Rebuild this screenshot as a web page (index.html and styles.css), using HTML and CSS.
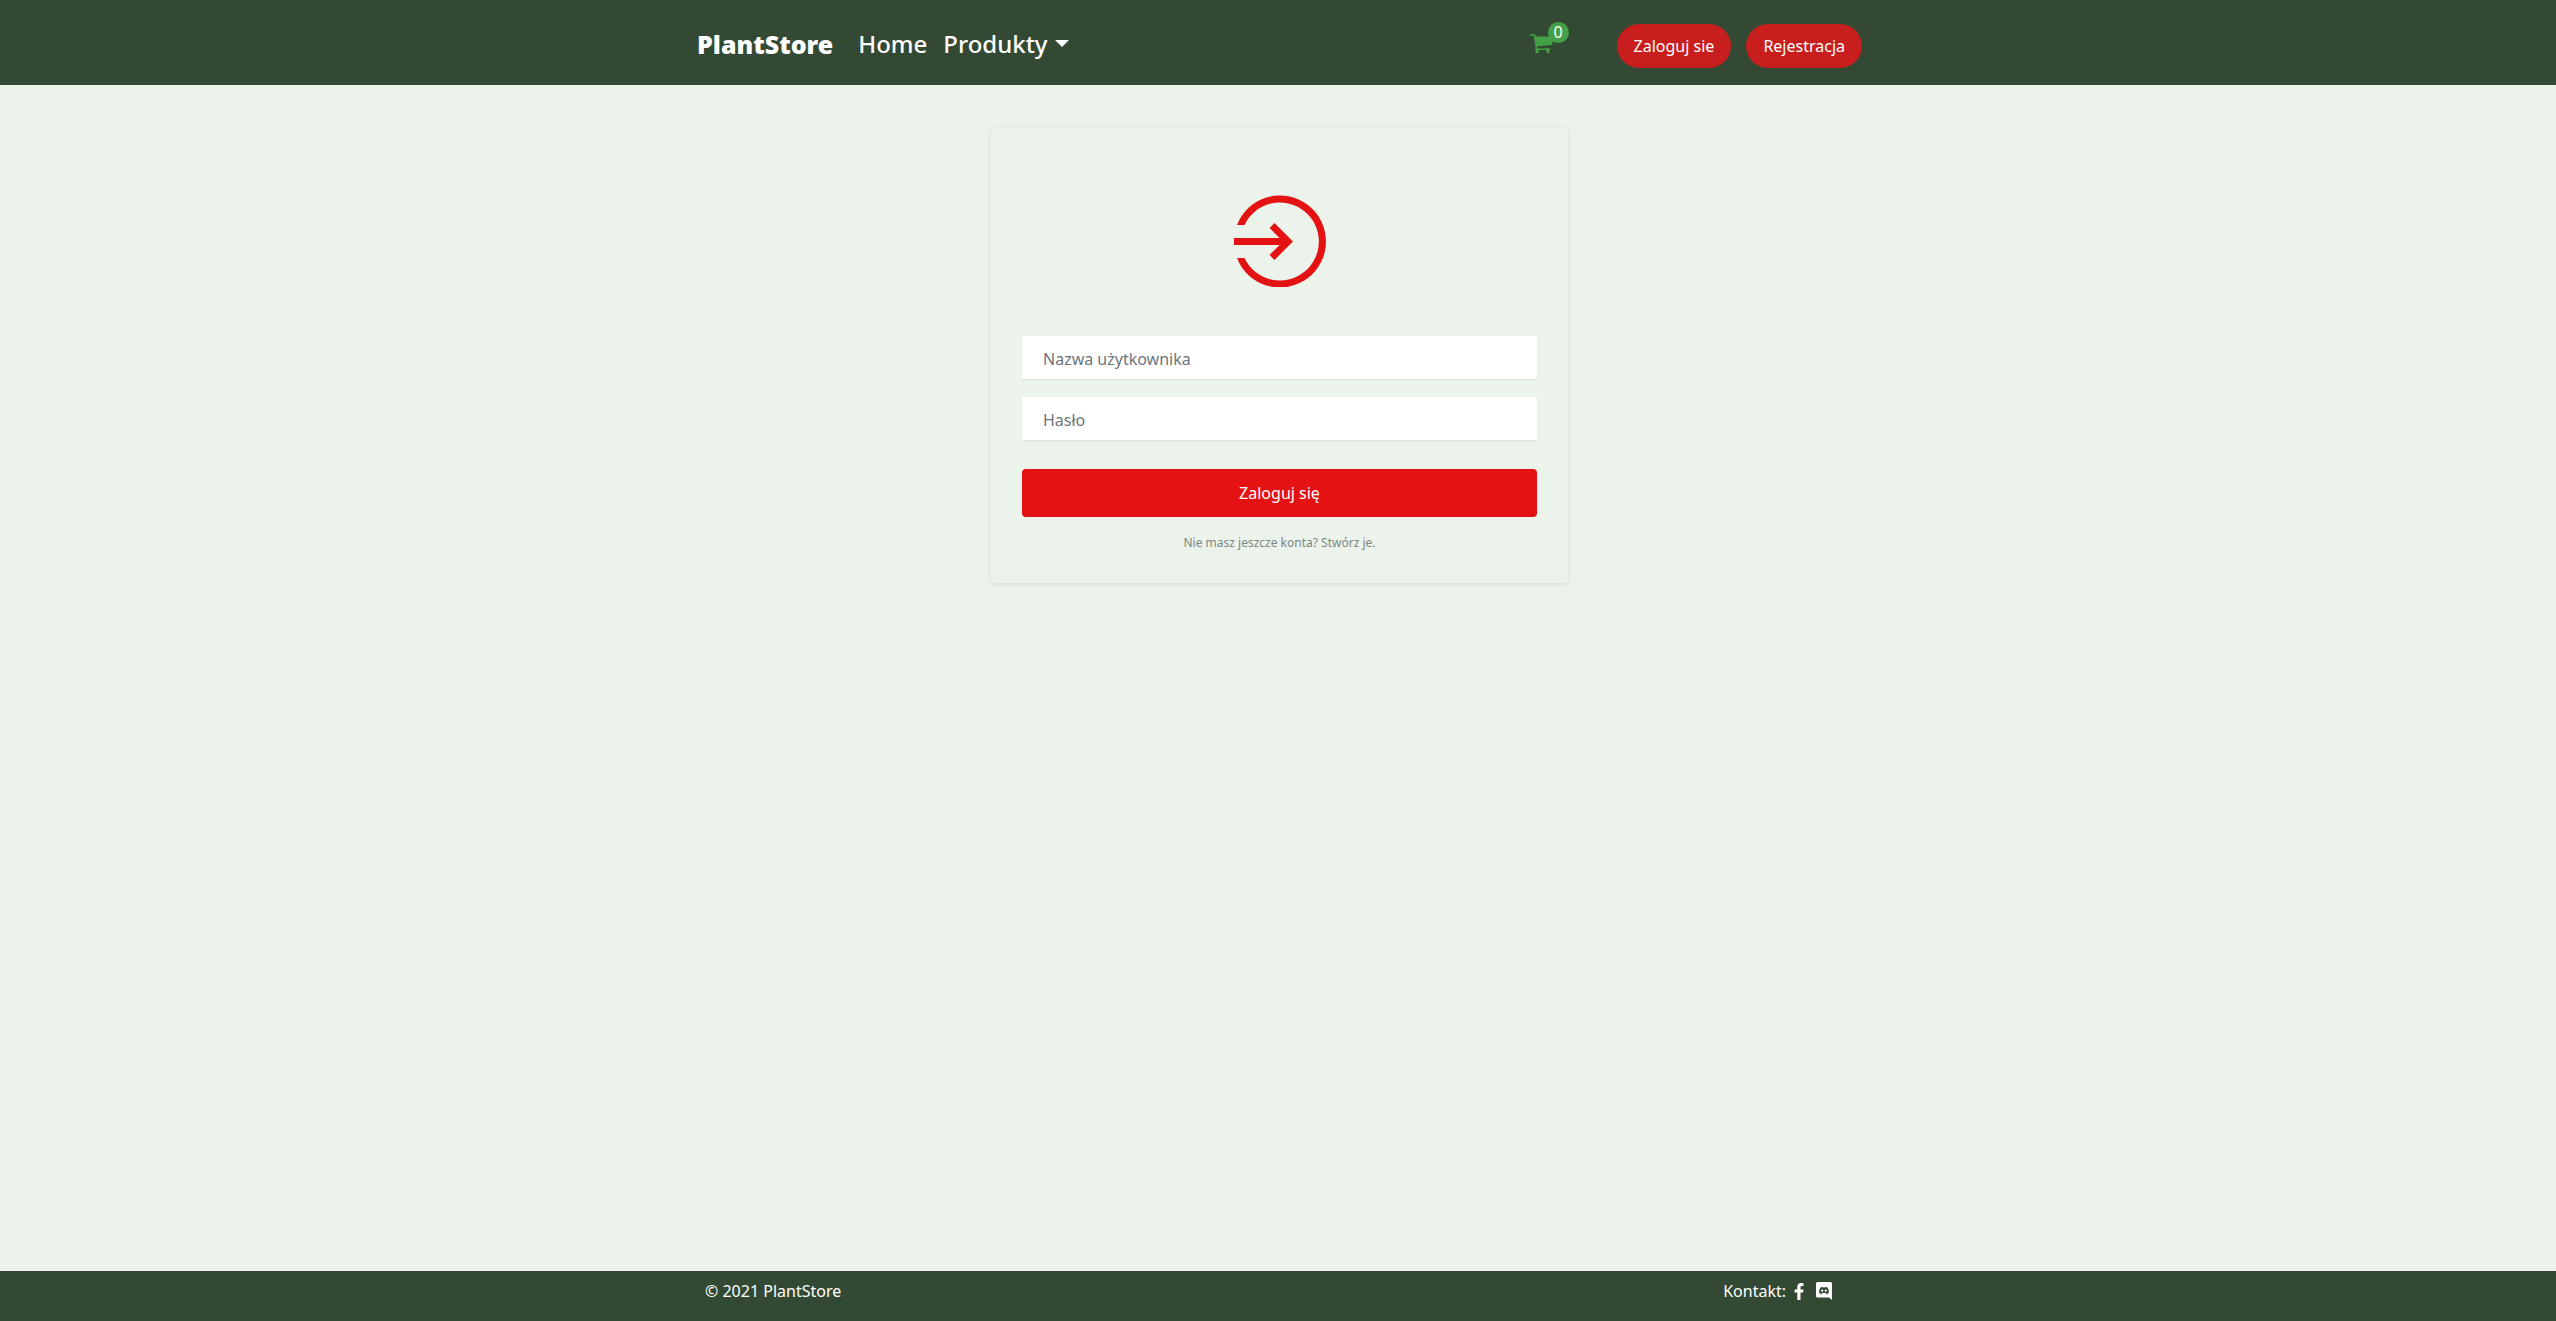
FILE: index.html
```html
<!DOCTYPE html>
<html lang="pl">
<head>
  <meta charset="utf-8">
  <meta name="viewport" content="width=device-width, initial-scale=1">
  <title>PlantStore</title>
  <link rel="stylesheet" href="styles.css">
</head>
<body>
  <header class="navbar">
    <div class="navbar-inner">
      <a class="brand" href="#">PlantStore</a>
      <nav class="nav-links">
        <a class="nav-link" href="#">Home</a>
        <a class="nav-link dropdown" href="#">Produkty</a>
      </nav>
      <a class="cart" href="#" aria-label="Koszyk">
        <svg class="cart-icon" viewBox="0 0 24 20" aria-hidden="true">
          <path d="M0 1h4.500l2 13" fill="none" stroke="currentColor" stroke-width="1.500"/>
          <path d="M4 2.500h20l-2 8.500L6 12.500z" fill="currentColor"/>
          <path d="M6.500 12v3.300H20" fill="none" stroke="currentColor" stroke-width="1.500"/>
          <path d="M5.500 14.600h3V19h-3zM16.500 14.600h3V19h-3z" fill="currentColor"/>
        </svg>
        <span class="cart-count">0</span>
      </a>
      <div class="account">
        <button class="pill" type="button">Zaloguj sie</button>
        <button class="pill" type="button">Rejestracja</button>
      </div>
    </div>
  </header>

  <main class="page">
    <form class="card">
      <svg class="login-icon" viewBox="0 0 92 92" aria-hidden="true">
        <path fill="currentColor" d="M3 30A46 46 0 1 1 3 63H10.500A39 39 0 1 0 10.500 30z"/>
        <path fill="none" stroke="currentColor" stroke-width="7" d="M0 46.500h55M38 30.500l16 16-16 16"/>
      </svg>
      <input class="field" type="text" placeholder="Nazwa użytkownika" aria-label="Nazwa użytkownika">
      <input class="field" type="password" placeholder="Hasło" aria-label="Hasło">
      <button class="submit" type="submit">Zaloguj się</button>
      <a class="register" href="#">Nie masz jeszcze konta? Stwórz je.</a>
    </form>
  </main>

  <footer class="footer">
    <div class="footer-inner">
      <span>© 2021 PlantStore</span>
      <div class="contact">
        <span>Kontakt:</span>
        <a class="social" href="#" aria-label="Facebook">
          <svg width="10" height="17" viewBox="0 0 10 17" aria-hidden="true"><path fill="currentColor" d="M9 9.500l.5-3H6.500v-2c0-.9.400-1.600 1.700-1.600h1.300V.3S8.300 0 7.200 0C4.800 0 3.300 1.500 3.300 4v2.500H.6v3h2.700V17h3.200V9.500z"/></svg>
        </a>
        <a class="social" href="#" aria-label="Discord">
          <svg width="16" height="18" viewBox="0 0 16 18" aria-hidden="true"><path fill="currentColor" fill-rule="evenodd" d="M1.500 0h13A1.500 1.500 0 0 1 16 1.500V18l-3-2.500H1.500A1.500 1.500 0 0 1 0 14V1.500A1.500 1.500 0 0 1 1.500 0zM4.500 5.500C3.500 7 3 9 3.200 11c.8.700 1.600 1 2.500 1l.6-.9h3.400l.6.900c.9 0 1.700-.3 2.500-1 .2-2-.3-4-1.300-5.500l-2-.7-.4.700H6.900l-.4-.7zM6.200 7.600a1.100 1.100 0 1 1 0 2.200 1.100 1.100 0 0 1 0-2.200zm3.600 0a1.100 1.100 0 1 1 0 2.200 1.100 1.100 0 0 1 0-2.200z"/></svg>
        </a>
      </div>
    </div>
  </footer>
</body>
</html>
```
FILE: styles.css
```css
* {
  box-sizing: border-box;
}

body {
  display: flex;
  flex-direction: column;
  min-height: 100vh;
  margin: 0;
  background: #ebf3ea;
  color: #fff;
  font: 16px/24px "Noto Sans", "Liberation Sans", sans-serif;
}

a {
  color: inherit;
  text-decoration: none;
}

button,
input {
  font: inherit;
}

.navbar {
  background: #344933;
}

.navbar-inner {
  display: flex;
  align-items: center;
  width: 100%;
  max-width: 1196px;
  min-height: 85px;
  margin: 0 auto;
  padding: 2px 14px 0 17px;
  font-size: 24px;
  line-height: 36px;
}

.brand {
  margin-right: 25px;
  font-size: 25px;
  font-weight: 900;
}

.nav-links {
  display: flex;
  gap: 16px;
}

.nav-link {
  font-weight: 500;
}

.dropdown::after {
  content: "";
  display: inline-block;
  margin-left: 7px;
  vertical-align: 6px;
  border: 7px solid transparent;
  border-top-color: currentColor;
  border-bottom: 0;
}

.cart {
  position: relative;
  margin-left: auto;
  padding: 4px 15px 4px 0;
  color: #43a047;
}

.cart-icon {
  display: block;
  width: 24px;
  height: 20px;
}

.cart-count {
  position: absolute;
  top: -8px;
  right: 0;
  width: 21px;
  height: 21px;
  border-radius: 50%;
  background: #43a047;
  color: #fff;
  font-size: 16px;
  line-height: 21px;
  text-align: center;
}

.account {
  display: flex;
  gap: 15px;
  margin-left: 48px;
  padding-top: 5px;
}

.pill {
  padding: 10px 17px;
  border: 0;
  border-radius: 22px;
  background: #c81e1e;
  color: #fff;
  font-size: 16px;
  line-height: 24px;
}

.page {
  flex: 1;
  padding: 42px 15px 41px 18px;
}

.card {
  display: flex;
  flex-direction: column;
  max-width: 577px;
  margin: 0 auto;
  padding: 68px 31px 30px;
  border-radius: 4px;
  box-shadow: 0 1px 5px rgba(0, 0, 0, 0.1);
}

.login-icon {
  align-self: center;
  width: 92px;
  height: 92px;
  margin-bottom: 49px;
  color: #e41212;
}

.field {
  height: 43px;
  margin-bottom: 18px;
  padding: 2px 21px 0;
  border: 0;
  background: #fff;
  box-shadow: 0 1px 1px rgba(0, 0, 0, 0.06);
}

.field::placeholder {
  color: #6c757d;
  opacity: 1;
}

.submit {
  height: 48px;
  margin: 11px 0 16px;
  padding: 0;
  border: 0;
  border-radius: 4px;
  background: #e41212;
  color: #fff;
}

.register {
  align-self: center;
  color: #7b8784;
  font-size: 12px;
  line-height: 20px;
}

.footer {
  min-height: 50px;
  background: #344933;
}

.footer-inner {
  display: flex;
  justify-content: space-between;
  width: 100%;
  max-width: 1160px;
  margin: 0 auto;
  padding: 8px 18px 0 7px;
}

.contact {
  display: flex;
  align-items: center;
  gap: 8px;
  margin-right: 8px;
}

.social {
  display: flex;
}

.social + .social {
  margin-left: 4px;
}
```
